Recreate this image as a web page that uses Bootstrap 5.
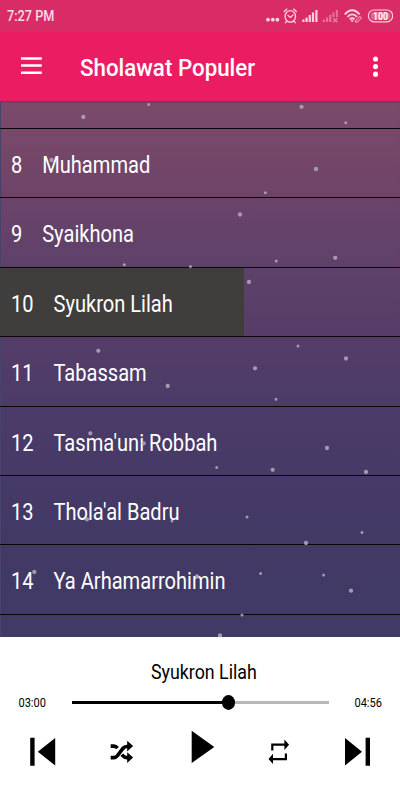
<!DOCTYPE html>
<html lang="id">
<head>
<meta charset="utf-8">
<meta name="viewport" content="width=device-width, initial-scale=1">
<title>Sholawat Populer</title>
<link href="https://cdn.jsdelivr.net/npm/bootstrap@5.3.0/dist/css/bootstrap.min.css" rel="stylesheet">
<style>
body{font-family:Roboto,"Liberation Sans",sans-serif;width:400px;height:800px;background:#fff;color:#000}
.status-strip{height:32px;background:#d92c67;padding:0 7px 0 7px}
.narrow{display:inline-block;white-space:nowrap;transform-origin:left center;transform:scaleX(.875)}
.clock{font-size:14.5px;font-weight:500;line-height:30px;padding-top:2px;color:#fbdde8}
.app-head{height:69px;background:#ea1d63;padding:0 20px}
.app-head .app-title{font-size:24px;font-weight:500;line-height:36px;margin-left:37px;padding-top:2px;transform:scaleX(.93)}
.menu-icon{margin-bottom:2px}
.tracks{height:535.5px;background:linear-gradient(#7b4a6b 0,#714568 75px,#65426a 125px,#5d4169 170px,#573d68 225px,#4c3b68 300px,#463a67 370px,#423965 450px,#403a65 100%);box-shadow:inset 1px 0 #46436f,inset 0 2px 2px -1px #5d3c5c}
.stars{left:0;top:0}
.track{height:69.4px;border-bottom:1.4px solid #08060b;padding:5.5px 0 0 11.3px}
.track.partial{height:28px}
.track .narrow{font-size:23px;line-height:28px;transform:scaleX(.873)}
.track .title-text{margin-left:22.8px}
.track.playing{background:linear-gradient(90deg,#403e3c 244px,transparent 244px)}
.player{height:163.5px}
.now{font-size:20.5px;line-height:26px;margin-top:22px}
.now .narrow,.time{transform-origin:center}
.now .narrow{transform:scaleX(.868)}
.seek-row{margin-top:7px;padding:3px 15.500px 0 15.500px}
.time{font-size:13px;line-height:16px;transform:scaleX(.85)}
.seek{width:257px;height:3px;background:#b8b8b8;border-radius:0}
.seek-fill{height:3px;background:#000}
.knob{width:13.4px;height:15px;border-radius:50%;background:#000;left:150px;top:-6px}
.controls{margin-top:5px}
</style>
<script src="https://cdn.jsdelivr.net/npm/bootstrap@5.3.0/dist/js/bootstrap.bundle.min.js"></script>
</head>
<body class="d-flex flex-column overflow-hidden m-0">
<div class="status-strip d-flex align-items-center justify-content-between">
  <span class="narrow clock">7:27 PM</span>
  <svg width="130" height="24" viewBox="264 4 130 24" fill="#fbd3e0">
    <circle cx="269" cy="19.700" r="1.900"/><circle cx="273.800" cy="19.700" r="1.900"/><circle cx="278.400" cy="19.700" r="1.900"/>
    <g fill="none" stroke="#fbd3e0" stroke-width="1.300" stroke-linecap="round" transform="translate(1 0)"><ellipse cx="290.300" cy="16.400" rx="5.200" ry="5.800"/><path d="M284.200 11.500l2.700-2.400M296.400 11.500l-2.700-2.400M288 15.500l2.500 2 2.500-2.500M286.500 21.500l-1 1.200M294.200 21.500l1 1.200"/></g>
    <g transform="translate(1 0)"><path d="M302.300 19.500h2.200V22h-2.200zM305.500 17.500h2.200V22h-2.200zM308.700 15h2.200v7h-2.200zM311.900 12.500h2.200V22h-2.200zM315.300 10h2.200v12h-2.200z"/>
    <g opacity=".42"><path d="M322.800 19.500h2.200V22h-2.200zM326 17.500h2.200V22h-2.200zM329.200 15h2.200v7h-2.200zM332.400 12.500h2v4.500h-2zM335.800 10h2.100v7h-2.100z"/><path d="M333.300 18.200l4 4M337.300 18.200l-4 4" stroke="#fff" stroke-width="1.300"/></g>
    <g fill="none" stroke="#fbd3e0" stroke-width="1.900"><path d="M344.800 14.300q7.400-8.200 14.800 0M347.400 16.900q4.800-5 9.700 0M349.800 19.300q2.400-2.300 4.800 0"/></g>
    <path d="M350.300 20.200h3.600l-1.800 2.100z"/><path d="M355.500 20.800l4.500-4.500 1.500 1.500-4 4.200-2 .1z" fill="#d92c67" stroke="#fbd3e0" stroke-width=".9"/></g>
    <g transform="translate(1.200 0)"><rect x="368.200" y="10" width="24.200" height="11.800" rx="5.700" fill="none" stroke="#fbd3e0" stroke-width="1.200"/>
    <rect x="370.500" y="12" width="19.600" height="7.800" rx="3.500" opacity=".35"/>
    <text x="372.800" y="19.600" font-size="10" font-weight="700" textLength="15" lengthAdjust="spacingAndGlyphs" fill="#fff">100</text></g>
  </svg>
</div>
<header class="app-head d-flex align-items-center text-white">
  <svg class="menu-icon" width="23" height="20" viewBox="20 56 23 20" fill="#fff"><path d="M21 57.200h20.800v2.500H21zM21 64.300h20.800v2.500H21zM21 71.400h20.800v2.500H21z"/></svg>
  <span class="narrow app-title">Sholawat Populer</span>
  <svg class="ms-auto flex-shrink-0" width="9" height="24" viewBox="0 0 9 24" fill="#fff"><ellipse cx="4.500" cy="4" rx="2.500" ry="2.600"/><ellipse cx="4.500" cy="11.600" rx="2.500" ry="2.600"/><ellipse cx="4.500" cy="19.200" rx="2.500" ry="2.600"/></svg>
</header>
<main class="tracks position-relative overflow-hidden text-white flex-shrink-0">
  <div class="track partial"></div>
  <div class="track d-flex align-items-center"><span class="narrow">8<span class="title-text">Muhammad</span></span></div>
  <div class="track d-flex align-items-center"><span class="narrow">9<span class="title-text">Syaikhona</span></span></div>
  <div class="track playing d-flex align-items-center"><span class="narrow">10<span class="title-text">Syukron Lilah</span></span></div>
  <div class="track d-flex align-items-center"><span class="narrow">11<span class="title-text">Tabassam</span></span></div>
  <div class="track d-flex align-items-center"><span class="narrow">12<span class="title-text">Tasma'uni Robbah</span></span></div>
  <div class="track d-flex align-items-center"><span class="narrow">13<span class="title-text">Thola'al Badru</span></span></div>
  <div class="track d-flex align-items-center"><span class="narrow">14<span class="title-text">Ya Arhamarrohimin</span></span></div>
  <svg class="stars position-absolute" width="400" height="536" viewBox="0 101 400 536" fill="none" stroke="#b3a6b6" stroke-linecap="round" opacity=".88">
    <path stroke-width="4.300" d="M83.300 117h.01M51.500 160h.01M301.500 106.800h.01M316 169h.01M240 214.500h.01M335.200 257.800h.01M98.300 350.800h.01M167.700 386h.01M90.300 433.300h.01M143.700 443.300h.01M249 282h.01M346 358.500h.01M255 368.300h.01M327 448h.01M87 519.300h.01M34.300 572h.01M197 576.500h.01M272.700 469.800h.01M366 472h.01M306 543h.01M351 590.700h.01M220 635.500h.01"/>
    <path stroke-width="3" d="M148.700 104.500h.01M124.300 264.700h.01M190.500 266.500h.01M345.800 122.800h.01M265.400 192.700h.01M276.200 261h.01M298 346h.01M276 399.300h.01M172 521h.01M216.700 467.500h.01M247 517h.01M362 532.500h.01M260.600 573.600h.01M323.600 575h.01M242 615h.01"/>
  </svg>
</main>
<footer class="player bg-white flex-shrink-0">
  <div class="now text-center ps-2"><span class="narrow">Syukron Lilah</span></div>
  <div class="seek-row d-flex align-items-center justify-content-between">
    <span class="narrow time">03:00</span>
    <div class="seek position-relative"><div class="seek-fill" style="width:61%"></div><div class="knob position-absolute"></div></div>
    <span class="narrow time">04:56</span>
  </div>
  <svg class="controls d-block" width="400" height="70" viewBox="0 716 400 70">
    <path d="M30.200 737.800h4.400v28h-4.400zM55.200 738v27.500L37.800 751.700z"/>
    <path d="M191.700 730.800v32.300l22.600-16.200z"/>
    <path d="M345 738v27.500l17-13.800zM365.600 737.800h4.400v28h-4.400z"/>
    <g fill="none" stroke="#000" stroke-width="3.700"><path d="M110.700 757.600h3.200q2.100 0 3.700-2.100l5.300-7q1.600-2 3.800-2h2M110.700 746.100h3.200q2 0 3.600 2M121.900 754.600l1.100 1.300q1.500 1.700 3.600 1.700h2.200"/></g>
    <path d="M127.200 740.700l5.900 5.400-5.900 5.400zM127.200 752.200l5.900 5.400-5.900 5.400z"/>
    <g fill="none" stroke="#000" stroke-width="2.200"><path d="M272.300 750.500v-5.800h13M285.900 753.400v5.800h-13"/></g>
    <path d="M284.400 739.400l4.700 5.300-4.700 5.300zM273 753.800l-4.500 5.300 4.500 5z"/>
  </svg>
</footer>
</body>
</html>
